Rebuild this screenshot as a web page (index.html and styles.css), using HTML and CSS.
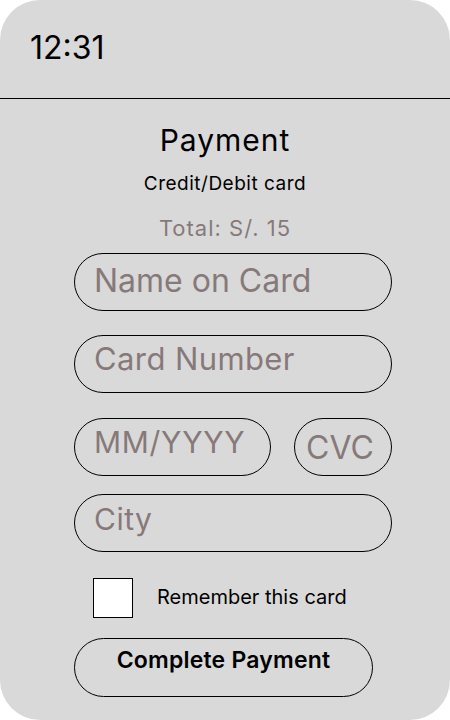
FILE: index.html
```html
<!DOCTYPE html>
<html>
<head>
<meta charset="utf-8">
<link rel="stylesheet" href="styles.css">
</head>
<body>
<div class="phone">
  <div class="status"><span class="time">12:31</span></div>
  <div class="content">
    <h1 class="title">Payment</h1>
    <div class="subtitle">Credit/Debit card</div>
    <div class="total">Total: S/. 15</div>
    <div class="form">
      <div class="field name">Name on Card</div>
      <div class="field number">Card Number</div>
      <div class="row">
        <div class="field date">MM/YYYY</div>
        <div class="field cvc">CVC</div>
      </div>
      <div class="field city">City</div>
    </div>
    <div class="remember">
      <span class="box"></span>
      <span class="remember-text">Remember this card</span>
    </div>
    <div class="button">Complete Payment</div>
  </div>
</div>
</body>
</html>
```
FILE: styles.css
```css
html, body {
  margin: 0;
  padding: 0;
  background: #ffffff;
}
.phone {
  width: 450px;
  height: 720px;
  background: #d9d9d9;
  border-radius: 40px;
  overflow: hidden;
  font-family: Inter, "Noto Sans", sans-serif;
  color: #000;
}
.status {
  height: 99px;
  border-bottom: 1px solid #000;
  box-sizing: border-box;
  padding: 29px 0 0 30px;
}
.time {
  display: block;
  font-size: 32px;
  line-height: 38px;
}
.content {
  display: flex;
  flex-direction: column;
  padding-top: 23px;
}
.title {
  margin: 0;
  text-align: center;
  font-weight: 400;
  font-size: 30px;
  line-height: 36px;
  letter-spacing: 1px;
}
.subtitle {
  text-align: center;
  font-size: 19px;
  line-height: 23px;
  letter-spacing: 0.5px;
  margin-top: 14px;
}
.total {
  text-align: center;
  font-size: 22px;
  line-height: 26px;
  letter-spacing: 1px;
  color: #877979;
  margin-top: 20px;
}
.form {
  display: flex;
  flex-direction: column;
  margin: 12px 0 0 74px;
  width: 318px;
}
.field {
  box-sizing: border-box;
  height: 58px;
  border: 1px solid #000;
  border-radius: 29px;
  color: #877979;
  padding-left: 19px;
  white-space: nowrap;
}
.name {
  font-size: 32px;
  line-height: 32px;
  padding-top: 11px;
}
.number {
  margin-top: 24px;
  font-size: 31px;
  line-height: 31px;
  letter-spacing: 0.4px;
  padding-top: 7px;
}
.row {
  display: flex;
  justify-content: space-between;
  margin-top: 25px;
}
.date {
  width: 197px;
  font-size: 30px;
  line-height: 30px;
  letter-spacing: 0.7px;
  padding-top: 8px;
}
.cvc {
  width: 98px;
  font-size: 32px;
  line-height: 32px;
  padding-left: 11px;
  padding-top: 13px;
}
.city {
  margin-top: 18px;
  font-size: 30px;
  line-height: 30px;
  letter-spacing: 0.5px;
  padding-top: 9px;
}
.remember {
  display: flex;
  align-items: flex-start;
  margin: 26px 0 0 93px;
}
.box {
  width: 40px;
  height: 40px;
  box-sizing: border-box;
  border: 1px solid #000;
  background: #fff;
}
.remember-text {
  font-size: 20px;
  line-height: 24px;
  margin: 7px 0 0 24px;
}
.button {
  box-sizing: border-box;
  margin: 20px 0 0 74px;
  width: 299px;
  height: 59px;
  border: 1px solid #000;
  border-radius: 30px;
  text-align: center;
  font-size: 23px;
  font-weight: 600;
  line-height: 23px;
  letter-spacing: 0.2px;
  padding-top: 10px;
}
```
